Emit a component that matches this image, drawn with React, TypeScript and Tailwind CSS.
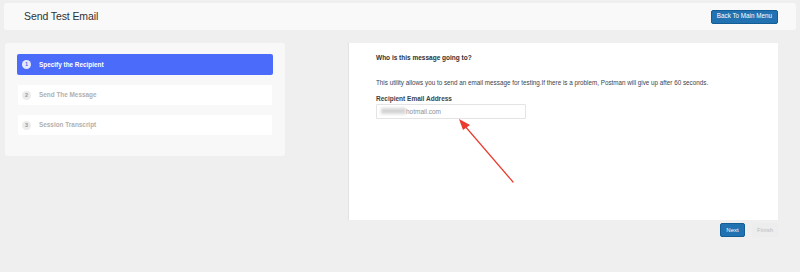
import React from 'react';

const steps = [
  { n: 1, label: 'Specify the Recipient', active: true },
  { n: 2, label: 'Send The Message', active: false },
  { n: 3, label: 'Session Transcript', active: false },
];

const font = { fontFamily: '"Liberation Sans", Arial, sans-serif' };

export default function App() {
  return (
    <div className="w-[800px] h-[272px] bg-[#efefef] overflow-hidden pt-[3px]" style={font}>
      {/* header */}
      <div className="mx-[4px] h-[27px] bg-[#f9f9f9] rounded-[3px] flex items-center justify-between pl-[20px] pr-[18px]">
        <h1 className="text-[10.5px] text-[#2c3338] tracking-[-0.1px]">Send Test Email</h1>
        <button className="h-[14px] px-[5px] bg-[#2271b1] border border-[#135e96] rounded-[2px] text-white text-[6.3px] leading-none">
          Back To Main Menu
        </button>
      </div>

      <div className="flex mt-[13px]">
        {/* steps */}
        <div className="ml-[5px] w-[280px] h-[113px] bg-[#f8f8f8] rounded-[3px] pt-[11px] px-[12px] flex flex-col gap-[10px]">
          {steps.map((s) => (
            <div
              key={s.n}
              className={
                s.active
                  ? 'h-[21px] bg-[#4b6bfb] rounded-[2px] flex items-center pl-[5px]'
                  : 'h-[20px] mx-[1px] bg-white rounded-[1px] flex items-center pl-[4px]'
              }
            >
              <span
                className={
                  s.active
                    ? 'w-[9px] h-[9px] rounded-full bg-[#e6e9f7] text-[#4b6bfb] text-[5.5px] font-bold flex items-center justify-center'
                    : 'w-[9px] h-[9px] rounded-full bg-[#ececec] text-[#9a9a9a] text-[5.5px] font-bold flex items-center justify-center'
                }
              >
                {s.n}
              </span>
              <span
                className={
                  s.active
                    ? 'ml-[8px] text-[6.4px] font-bold text-white'
                    : 'ml-[8px] text-[6.4px] font-bold text-[#b0b0b0]'
                }
              >
                {s.label}
              </span>
            </div>
          ))}
        </div>

        {/* right column */}
        <div className="ml-[63px] w-[430px]">
          <div className="relative h-[177px] bg-white border-l border-[#e2e2e2] pl-[27px] pt-[10px]">
            <p className="text-[6.5px] font-bold text-[#2c3338]">Who is this message going to?</p>
            <p className="mt-[15px] text-[6.3px] text-[#3c434a]">
              This utility allows you to send an email message for testing.If there is a problem, Postman will give up after 60 seconds.
            </p>
            <p className="mt-[7px] text-[6.5px] font-bold text-[#3c434a]">Recipient Email Address</p>
            <div className="mt-0 w-[150px] h-[15px] border border-[#e4e4e4] rounded-[1px] flex items-center pl-[4px]">
              <span className="w-[25px] h-[6px] bg-[#d4d4d4] blur-[1.5px]"></span>
              <span className="text-[6.5px] text-[#8c8f94]">hotmail.com</span>
            </div>
            <svg className="absolute left-0 top-0" width="200" height="160" viewBox="0 0 200 160">
              <line x1="164" y1="139" x2="115" y2="82" stroke="#ea3b2e" strokeWidth="1.2" strokeLinecap="round" />
              <polygon points="110,76 121,82 114,87" fill="#ea3b2e" />
            </svg>
          </div>
          <div className="flex justify-end items-center gap-[7px] mt-[3px]">
            <button className="h-[14px] w-[25px] bg-[#2271b1] border border-[#135e96] rounded-[2px] text-white text-[6px] leading-none">
              Next
            </button>
            <button className="h-[14px] w-[26px] bg-[#ededed] rounded-[2px] text-[#bcbcbc] text-[6px] leading-none">
              Finish
            </button>
          </div>
        </div>
      </div>
    </div>
  );
}
